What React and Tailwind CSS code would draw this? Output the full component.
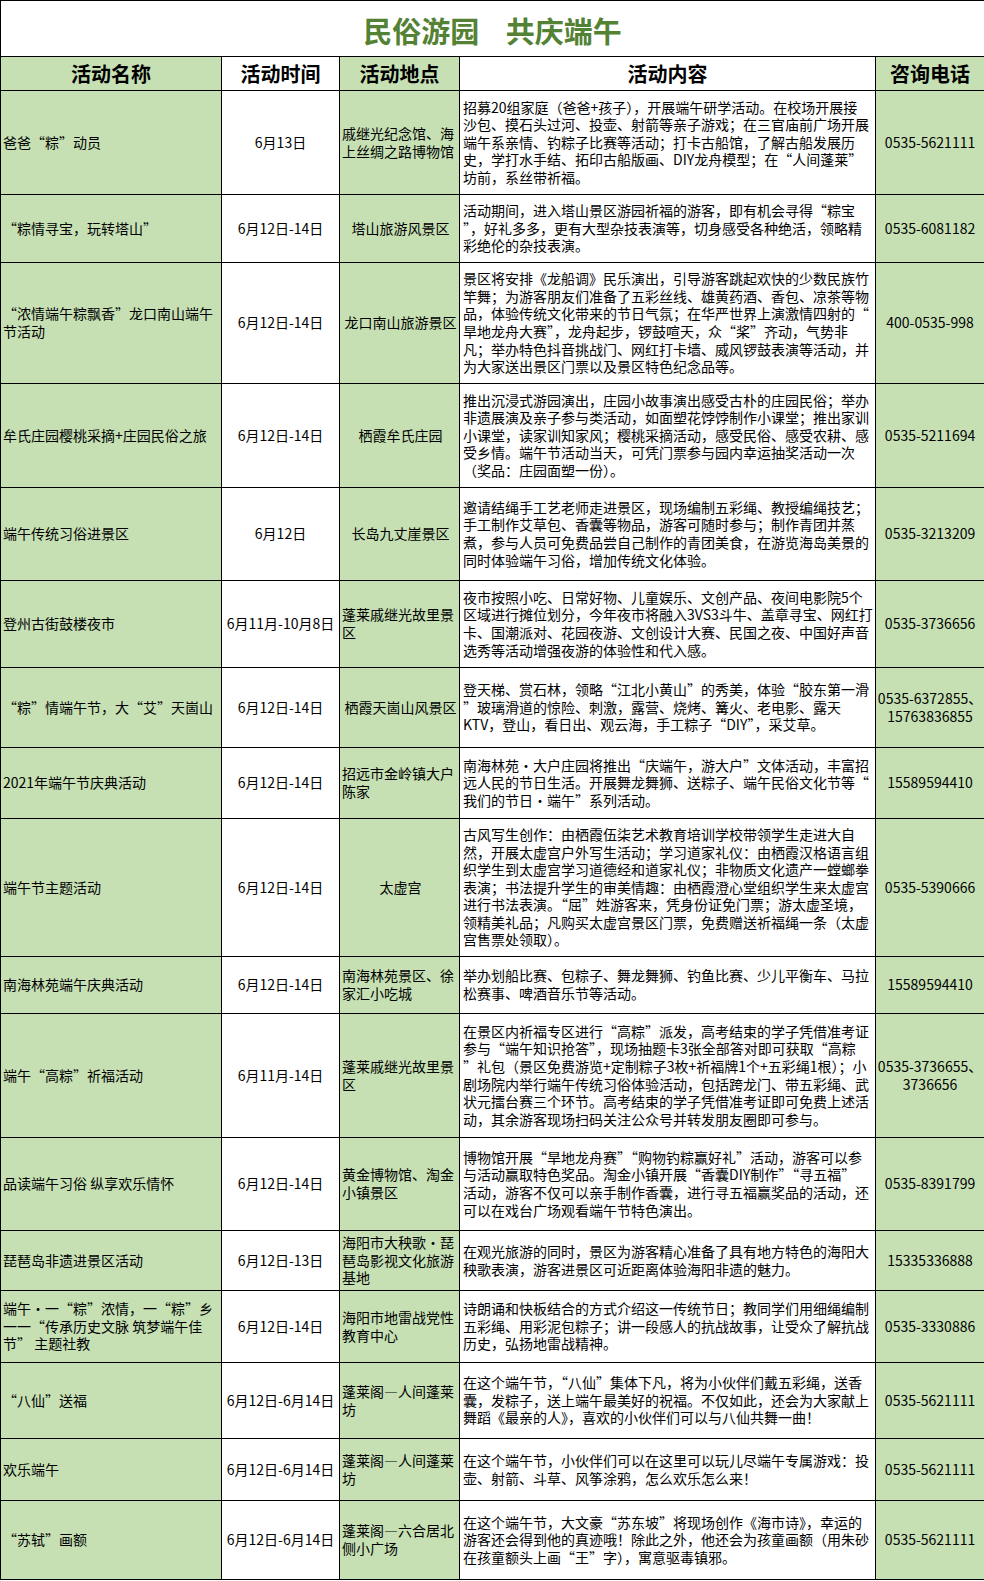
import React from 'react';

const rows = [
  {
    h: 104,
    name: '爸爸“粽”动员',
    time: '6月13日',
    place: '戚继光纪念馆、海\n上丝绸之路博物馆',
    left: true,
    content:
      '招募20组家庭（爸爸+孩子），开展端午研学活动。在校场开展接\n沙包、摸石头过河、投壶、射箭等亲子游戏；在三官庙前广场开展\n端午系亲情、钓粽子比赛等活动；打卡古船馆，了解古船发展历\n史，学打水手结、拓印古船版画、DIY龙舟模型；在“人间蓬莱”\n坊前，系丝带祈福。',
    phone: '0535-5621111',
  },
  {
    h: 68,
    name: '“粽情寻宝，玩转塔山”',
    time: '6月12日-14日',
    place: '塔山旅游风景区',
    content:
      '活动期间，进入塔山景区游园祈福的游客，即有机会寻得“粽宝\n”，好礼多多，更有大型杂技表演等，切身感受各种绝活，领略精\n彩绝伦的杂技表演。',
    phone: '0535-6081182',
  },
  {
    h: 121,
    name: '“浓情端午粽飘香”龙口南山端午\n节活动',
    time: '6月12日-14日',
    place: '龙口南山旅游景区',
    content:
      '景区将安排《龙船调》民乐演出，引导游客跳起欢快的少数民族竹\n竿舞；为游客朋友们准备了五彩丝线、雄黄药酒、香包、凉茶等物\n品，体验传统文化带来的节日气氛；在华严世界上演激情四射的“\n旱地龙舟大赛”，龙舟起步，锣鼓喧天，众“桨”齐动，气势非\n凡；举办特色抖音挑战门、网红打卡墙、威风锣鼓表演等活动，并\n为大家送出景区门票以及景区特色纪念品等。',
    phone: '400-0535-998',
  },
  {
    h: 104,
    name: '牟氏庄园樱桃采摘+庄园民俗之旅',
    time: '6月12日-14日',
    place: '栖霞牟氏庄园',
    content:
      '推出沉浸式游园演出，庄园小故事演出感受古朴的庄园民俗；举办\n非遗展演及亲子参与类活动，如面塑花饽饽制作小课堂；推出家训\n小课堂，读家训知家风；樱桃采摘活动，感受民俗、感受农耕、感\n受乡情。端午节活动当天，可凭门票参与园内幸运抽奖活动一次\n（奖品：庄园面塑一份）。',
    phone: '0535-5211694',
  },
  {
    h: 93,
    name: '端午传统习俗进景区',
    time: '6月12日',
    place: '长岛九丈崖景区',
    content:
      '邀请结绳手工艺老师走进景区，现场编制五彩绳、教授编绳技艺；\n手工制作艾草包、香囊等物品，游客可随时参与；制作青团并蒸\n煮，参与人员可免费品尝自己制作的青团美食，在游览海岛美景的\n同时体验端午习俗，增加传统文化体验。',
    phone: '0535-3213209',
  },
  {
    h: 87,
    name: '登州古街鼓楼夜市',
    time: '6月11月-10月8日',
    place: '蓬莱戚继光故里景\n区',
    left: true,
    content:
      '夜市按照小吃、日常好物、儿童娱乐、文创产品、夜间电影院5个\n区域进行摊位划分，今年夜市将融入3VS3斗牛、盖章寻宝、网红打\n卡、国潮派对、花园夜游、文创设计大赛、民国之夜、中国好声音\n选秀等活动增强夜游的体验性和代入感。',
    phone: '0535-3736656',
  },
  {
    h: 80,
    name: '“粽”情端午节，大“艾”天崮山',
    time: '6月12日-14日',
    place: '栖霞天崮山风景区',
    content:
      '登天梯、赏石林，领略“江北小黄山”的秀美，体验“胶东第一滑\n”玻璃滑道的惊险、刺激，露营、烧烤、篝火、老电影、露天\nKTV，登山，看日出、观云海，手工粽子“DIY”，采艾草。',
    phone: '0535-6372855、\n15763836855',
  },
  {
    h: 71,
    name: '2021年端午节庆典活动',
    time: '6月12日-14日',
    place: '招远市金岭镇大户\n陈家',
    left: true,
    content:
      '南海林苑·大户庄园将推出“庆端午，游大户”文体活动，丰富招\n远人民的节日生活。开展舞龙舞狮、送粽子、端午民俗文化节等“\n我们的节日·端午”系列活动。',
    phone: '15589594410',
  },
  {
    h: 138,
    name: '端午节主题活动',
    time: '6月12日-14日',
    place: '太虚宫',
    content:
      '古风写生创作：由栖霞伍柒艺术教育培训学校带领学生走进大自\n然，开展太虚宫户外写生活动；学习道家礼仪：由栖霞汉格语言组\n织学生到太虚宫学习道德经和道家礼仪；非物质文化遗产一螳螂拳\n表演；书法提升学生的审美情趣：由栖霞澄心堂组织学生来太虚宫\n进行书法表演。“屈”姓游客来，凭身份证免门票；游太虚圣境，\n领精美礼品；凡购买太虚宫景区门票，免费赠送祈福绳一条（太虚\n宫售票处领取）。',
    phone: '0535-5390666',
  },
  {
    h: 57,
    name: '南海林苑端午庆典活动',
    time: '6月12日-14日',
    place: '南海林苑景区、徐\n家汇小吃城',
    left: true,
    content: '举办划船比赛、包粽子、舞龙舞狮、钓鱼比赛、少儿平衡车、马拉\n松赛事、啤酒音乐节等活动。',
    phone: '15589594410',
  },
  {
    h: 124,
    name: '端午“高粽”祈福活动',
    time: '6月11月-14日',
    place: '蓬莱戚继光故里景\n区',
    left: true,
    content:
      '在景区内祈福专区进行“高粽”派发，高考结束的学子凭借准考证\n参与“端午知识抢答”，现场抽题卡3张全部答对即可获取“高粽\n”礼包（景区免费游览+定制粽子3枚+祈福牌1个+五彩绳1根）；小\n剧场院内举行端午传统习俗体验活动，包括跨龙门、带五彩绳、武\n状元擂台赛三个环节。高考结束的学子凭借准考证即可免费上述活\n动，其余游客现场扫码关注公众号并转发朋友圈即可参与。',
    phone: '0535-3736655、\n3736656',
  },
  {
    h: 93,
    name: '品读端午习俗 纵享欢乐情怀',
    time: '6月12日-14日',
    place: '黄金博物馆、淘金\n小镇景区',
    left: true,
    content:
      '博物馆开展“旱地龙舟赛”“购物钓粽赢好礼”活动，游客可以参\n与活动赢取特色奖品。淘金小镇开展“香囊DIY制作”“寻五福”\n活动，游客不仅可以亲手制作香囊，进行寻五福赢奖品的活动，还\n可以在戏台广场观看端午节特色演出。',
    phone: '0535-8391799',
  },
  {
    h: 60,
    name: '琵琶岛非遗进景区活动',
    time: '6月12日-13日',
    place: '海阳市大秧歌·琵\n琶岛影视文化旅游\n基地',
    left: true,
    content: '在观光旅游的同时，景区为游客精心准备了具有地方特色的海阳大\n秧歌表演，游客进景区可近距离体验海阳非遗的魅力。',
    phone: '15335336888',
  },
  {
    h: 72,
    name: '端午·一“粽”浓情，一“粽”乡\n一一“传承历史文脉 筑梦端午佳\n节” 主题社教',
    time: '6月12日-14日',
    place: '海阳市地雷战党性\n教育中心',
    left: true,
    content:
      '诗朗诵和快板结合的方式介绍这一传统节日；教同学们用细绳编制\n五彩绳、用彩泥包粽子；讲一段感人的抗战故事，让受众了解抗战\n历史，弘扬地雷战精神。',
    phone: '0535-3330886',
  },
  {
    h: 76,
    name: '“八仙”送福',
    time: '6月12日-6月14日',
    place: '蓬莱阁—人间蓬莱\n坊',
    left: true,
    content:
      '在这个端午节，“八仙”集体下凡，将为小伙伴们戴五彩绳，送香\n囊，发粽子，送上端午最美好的祝福。不仅如此，还会为大家献上\n舞蹈《最亲的人》，喜欢的小伙伴们可以与八仙共舞一曲！',
    phone: '0535-5621111',
  },
  {
    h: 62,
    name: '欢乐端午',
    time: '6月12日-6月14日',
    place: '蓬莱阁—人间蓬莱\n坊',
    left: true,
    content: '在这个端午节，小伙伴们可以在这里可以玩儿尽端午专属游戏：投\n壶、射箭、斗草、风筝涂鸦，怎么欢乐怎么来！',
    phone: '0535-5621111',
  },
  {
    h: 79,
    name: '“苏轼”画额',
    time: '6月12日-6月14日',
    place: '蓬莱阁—六合居北\n侧小广场',
    left: true,
    content:
      '在这个端午节，大文豪“苏东坡”将现场创作《海市诗》，幸运的\n游客还会得到他的真迹哦！除此之外，他还会为孩童画额（用朱砂\n在孩童额头上画“王”字），寓意驱毒镇邪。',
    phone: '0535-5621111',
  },
];

const cell = 'border border-black align-middle whitespace-pre overflow-hidden leading-[17.6px] text-[14px] text-black';

function App() {
  return (
    <div lang="zh-CN" className="w-[984px] bg-white font-['Noto_Sans_CJK_SC',sans-serif]">
      <table className="w-[984px] table-fixed border-collapse">
        <colgroup>
          <col className="w-[221px]" />
          <col className="w-[118px]" />
          <col className="w-[120px]" />
          <col className="w-[416px]" />
          <col className="w-[109px]" />
        </colgroup>
        <thead>
          <tr>
            {/* title */}
            <th colSpan={5} className="border border-black h-[56px] pt-[4px] text-center text-[29px] font-bold text-[#548235] leading-none [word-spacing:20px]">
              民俗游园 共庆端午
            </th>
          </tr>
          <tr className="text-[20px] font-bold text-black">
            <th className="border border-black h-[34px] bg-[#c6e0b4]">活动名称</th>
            <th className="border border-black bg-white">活动时间</th>
            <th className="border border-black bg-[#c6e0b4]">活动地点</th>
            <th className="border border-black bg-white">活动内容</th>
            <th className="border border-black bg-[#c6e0b4]">咨询电话</th>
          </tr>
        </thead>
        <tbody>
          {rows.map((r, i) => (
            <tr key={i}>
              <td className={`${cell} bg-[#c6e0b4] pl-[2px] text-left`} style={{ height: r.h }}>
                {r.name}
              </td>
              <td className={`${cell} bg-white text-center`}>{r.time}</td>
              <td className={`${cell} bg-[#c6e0b4] pl-[2px] ${r.left ? 'text-left' : 'text-center'}`}>{r.place}</td>
              <td className={`${cell} bg-white pl-[3px] text-left`}>{r.content}</td>
              <td className={`${cell} bg-[#c6e0b4] text-center`}>{r.phone}</td>
            </tr>
          ))}
        </tbody>
      </table>
    </div>
  );
}

export default App;
